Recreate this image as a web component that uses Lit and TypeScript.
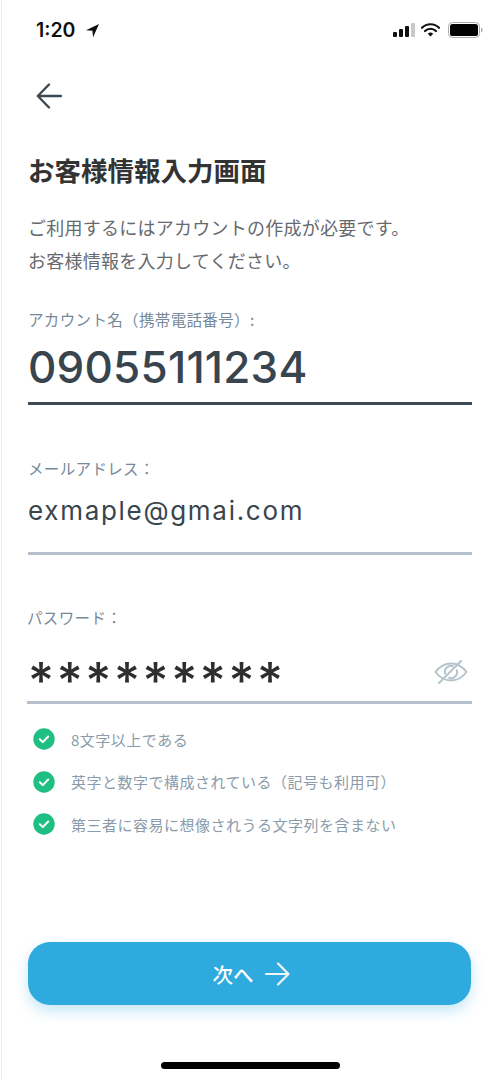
import { LitElement, html, css } from "lit";
import { customElement } from "lit/decorators.js";

const check = html`<svg class="chk" viewBox="0 0 22 22"><circle cx="11" cy="11" r="10.7" fill="#1fbf83"/><path d="M6.8 11.2l3 2.9 5.4-5.6" fill="none" stroke="#fff" stroke-width="2" stroke-linecap="round" stroke-linejoin="round"/></svg>`;

@customElement("app-root")
export class AppRoot extends LitElement {
  static styles = css`
    :host {
      display: block;
      width: 500px;
      height: 1080px;
      overflow: hidden;
      background: #fff;
      font-family: "Inter", "Noto Sans CJK JP", sans-serif;
    }
    * { box-sizing: border-box; }
    .page {
      width: 499px;
      height: 1080px;
      border-left: 1px solid #eeeeee;
      margin-left: 1px;
      display: flex;
      flex-direction: column;
      font-family: "Noto Sans CJK JP", sans-serif;
    }
    .status {
      height: 60px;
      padding: 19px 17px 0 34px;
      display: flex;
      align-items: flex-start;
      justify-content: space-between;
    }
    .time {
      display: flex;
      align-items: center;
      gap: 10px;
      font: 600 19.5px/22px "Inter", sans-serif;
      color: #111;
    }
    .sys { display: flex; align-items: center; gap: 8px; height: 22px; }
    .wifi { margin-left: -2px; }
    .back { margin: 23px 0 0 34px; height: 26px; display: block; }
    .body { padding: 0 28px 0 25px; display: flex; flex-direction: column; }
    h1 {
      margin: 43px 0 0 1px;
      font-size: 26.5px;
      line-height: 36px;
      font-weight: 700;
      color: #333;
    }
    .desc {
      margin: 23px 0 0 1px;
      font-size: 18px;
      line-height: 33px;
      font-weight: 400;
      color: #666a6e;
      letter-spacing: 0.25px;
    }
    .label {
      font-size: 15.5px;
      line-height: 22px;
      color: #76899a;
      letter-spacing: 0.35px;
    }
    .l1 { margin: 31px 0 0 1px; }
    .v1 {
      font: 500 44px/56px "Inter", sans-serif;
      color: #38454f;
      margin: 9px 0 0 1px;
      letter-spacing: 0.2px;
    }
    .rule { height: 3px; background: #b5c0cb; }
    .rule.dark { background: #3c4a55; margin: 0 0 0 1px; }
    .r1 { margin-top: 7px !important; }
    .l2 { margin: 52px 0 0 1px; }
    .v2 {
      font: 400 26px/36px "Inter", sans-serif;
      color: #38454f;
      letter-spacing: 1.7px;
      margin: 14px 0 0 1px;
    }
    .r2 { margin: 23px 0 0 1px; }
    .l3 { margin: 51px 0 0 0; }
    .pw {
      height: 42px;
      margin-top: 23px;
      display: flex;
      align-items: center;
      justify-content: space-between;
      padding: 0 4px 0 1px;
    }
    .stars { font: 500 50px/58px "Inter", sans-serif; color: #2e2e2e; letter-spacing: 2.6px; height: 42px; }
    .r3 { margin: 8px 0 0 0; }
    .rules { list-style: none; margin: 24px 0 0 6px; padding: 0; display: flex; flex-direction: column; gap: 20.5px; }
    .rules li {
      display: flex;
      align-items: center;
      gap: 16px;
      height: 22px;
      font-size: 15px;
      color: #8a9bab;
      letter-spacing: 0.5px;
    }
    .chk { width: 22px; height: 22px; flex: none; }
    .spacer { flex: 1; }
    .btn {
      margin: 0 29px 0 26px;
      padding: 0 0 0 3px;
      height: 63px;
      border: 0;
      border-radius: 22px;
      background: #2eaade;
      box-shadow: 0 6px 14px rgba(46, 170, 222, 0.28);
      color: #fff;
      font-family: inherit;
      font-size: 20.5px;
      font-weight: 500;
      display: flex;
      align-items: center;
      justify-content: center;
      gap: 11px;
    }
    .home {
      width: 179px;
      height: 7px;
      border-radius: 4px;
      background: #000;
      margin: 57px 0 11px 159px;
    }
  `;

  render() {
    return html`
      <div class="page">
        <div class="status">
          <div class="time">
            <span>1:20</span>
            <svg width="15" height="15" viewBox="0 0 15 15"><path d="M14 1L1 7.2l6.4.6.7 6.4z" fill="#111"/></svg>
          </div>
          <div class="sys">
            <svg width="22" height="14" viewBox="0 0 22 14">
              <rect x="0" y="9" width="4" height="5" rx="1" fill="#111"/>
              <rect x="6" y="6" width="4" height="8" rx="1" fill="#111"/>
              <rect x="12" y="3" width="4" height="11" rx="1" fill="#111"/>
              <rect x="18" y="0" width="4" height="14" rx="1" fill="#c9c9c9"/>
            </svg>
            <svg class="wifi" width="19" height="14" viewBox="0 0 19 14">
              <path d="M1 4.8a12 12 0 0 1 17 0" fill="none" stroke="#111" stroke-width="2.2" stroke-linecap="round"/>
              <path d="M4 8a7.8 7.8 0 0 1 11 0" fill="none" stroke="#111" stroke-width="2.2" stroke-linecap="round"/>
              <path d="M6.8 10.8a4 4 0 0 1 5.4 0L9.5 13.6z" fill="#111"/>
            </svg>
            <svg width="35" height="16" viewBox="0 0 35 16">
              <rect x="0.5" y="0.5" width="31" height="15" rx="4" fill="none" stroke="#aaa"/>
              <rect x="2" y="2" width="28" height="12" rx="2.6" fill="#000"/>
              <path d="M33 5.5c1 .3 1.6 1.3 1.6 2.5s-.6 2.2-1.6 2.5z" fill="#aaa"/>
            </svg>
          </div>
        </div>

        <svg class="back" width="26" height="26" viewBox="0 0 26 26">
          <path d="M25 13H2M13 1.5L1.8 13 13 24.5" fill="none" stroke="#3c4a55" stroke-width="2.4" stroke-linecap="round" stroke-linejoin="round"/>
        </svg>

        <div class="body">
          <h1>お客様情報入力画面</h1>
          <div class="desc">ご利用するにはアカウントの作成が必要です。<br />お客様情報を入力してください。</div>

          <div class="label l1">アカウント名（携帯電話番号）:</div>
          <div class="v1">09055111234</div>
          <div class="rule dark r1"></div>

          <div class="label l2">メールアドレス：</div>
          <div class="v2">exmaple@gmai.com</div>
          <div class="rule r2"></div>

          <div class="label l3">パスワード：</div>
          <div class="pw">
            <span class="stars">*********</span>
            <svg width="34" height="24" viewBox="0 0 34 24">
              <path d="M1.5 12C6 6 11 3.5 17 3.5S28 6 32.5 12C28 18 23 20.5 17 20.5S6 18 1.5 12z" fill="none" stroke="#b5c4cc" stroke-width="2" stroke-linejoin="round"/>
              <path d="M11.5 14.5a6 6 0 0 1 8-8M22.5 9.5a6 6 0 0 1-8 8" fill="none" stroke="#b5c4cc" stroke-width="2"/>
              <path d="M5 23L27 1" stroke="#b5c4cc" stroke-width="2" stroke-linecap="round"/>
            </svg>
          </div>
          <div class="rule r3"></div>

          <ul class="rules">
            <li>${check}<span>8文字以上である</span></li>
            <li>${check}<span>英字と数字で構成されている（記号も利用可）</span></li>
            <li>${check}<span>第三者に容易に想像されうる文字列を含まない</span></li>
          </ul>
        </div>

        <div class="spacer"></div>
        <button class="btn">
          <span>次へ</span>
          <svg width="25" height="24" viewBox="0 0 25 24"><path d="M1 12h22.5M13 1.5L23.5 12 13 22.5" fill="none" stroke="#f0f4f6" stroke-width="2.2" stroke-linecap="round" stroke-linejoin="round"/></svg>
        </button>
        <div class="home"></div>
      </div>
    `;
  }
}
